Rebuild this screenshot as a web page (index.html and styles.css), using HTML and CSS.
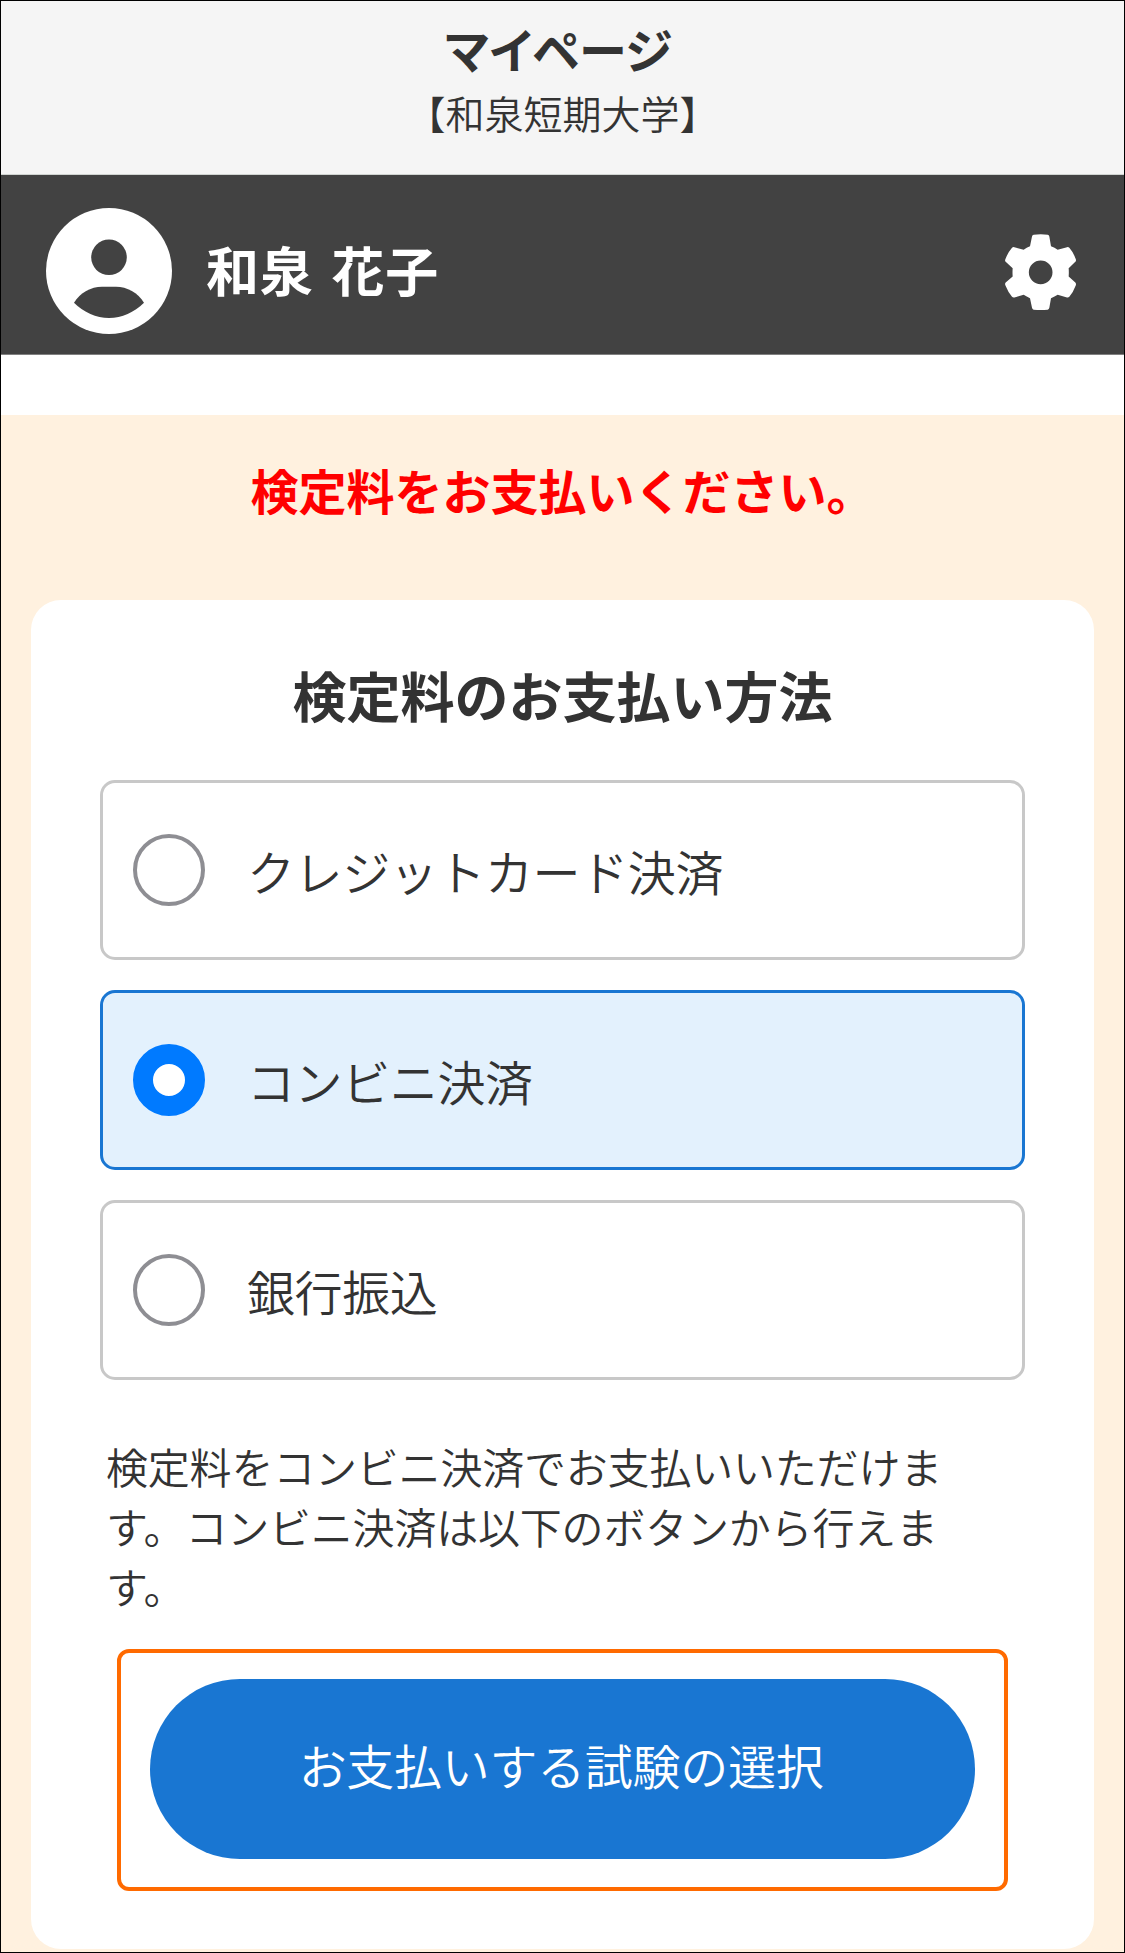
FILE: index.html
```html
<!DOCTYPE html>
<html lang="ja">
<head>
  <meta charset="UTF-8">
  <meta name="viewport" content="width=device-width, initial-scale=1.0">
  <title>マイページ</title>
  <link rel="stylesheet" href="styles.css">
</head>
<body>
  <div class="page">
    <header class="site-header">
      <h1>マイページ</h1>
      <p>【和泉短期大学】</p>
    </header>

    <div class="user-bar">
      <svg class="avatar" viewBox="0 0 126 126">
        <circle cx="63" cy="63" r="63" fill="#fff"/>
        <circle cx="63" cy="49.3" r="17.8" fill="#424242"/>
        <path d="M28 94.8C34 84.5 45 78.7 56 78.7H70C81 78.7 92 84.5 98 94.8C88 104.5 76 110 63 110C50 110 38 104.5 28 94.8Z" fill="#424242"/>
      </svg>
      <span class="user-name">和泉 花子</span>
      <svg class="gear" viewBox="138 102 213 227">
        <path fill="#fff" fill-rule="evenodd" d="M224 103.500Q245 101 266 103.500Q270 104 271 109L276 138Q287 142 296 149L324 141Q328 140 331 143Q343 157 350.500 177Q352 182 349 185L329 204Q330 216 329 229L349 247Q352 250 350.500 255Q343 275 331 290Q328 293 324 292L296 284Q287 290 276 294L271 323Q270 328 266 328.500Q245 330 224 328.500Q220 328 219 323L213 294Q203 290 194 284L166 292Q162 293 159 290Q147 275 139 255Q137 250 140 247L161 229Q160 216 161 204L140 185Q137 182 139 177Q147 157 159 143Q162 140 166 141L194 149Q203 142 213 138L219 109Q220 104 224 103.500ZM245 181A35.500 35.500 0 1 0 245 252A35.500 35.500 0 1 0 245 181Z"/>
      </svg>
    </div>

    <main class="content">
      <p class="notice">検定料をお支払いください。</p>

      <section class="card">
        <h2>検定料のお支払い方法</h2>
        <div class="options">
          <label class="option">
            <input type="radio" name="payment">
            <span>クレジットカード決済</span>
          </label>
          <label class="option selected">
            <input type="radio" name="payment" checked>
            <span>コンビニ決済</span>
          </label>
          <label class="option">
            <input type="radio" name="payment">
            <span>銀行振込</span>
          </label>
        </div>
        <p class="description">検定料をコンビニ決済でお支払いいただけます。コンビニ決済は以下のボタンから行えます。</p>
        <div class="button-frame">
          <button class="button" type="button">お支払いする試験の選択</button>
        </div>
      </section>
    </main>
  </div>
</body>
</html>
```
FILE: styles.css
```css
* {
  box-sizing: border-box;
}
body {
  margin: 0;
  font-family: "Noto Sans CJK JP", sans-serif;
  font-weight: 350;
  color: #333;
  background: #fff;
}
h1, h2, p {
  margin: 0;
}
.page {
  height: 1953px;
  border: 1px solid #000;
  display: flex;
  flex-direction: column;
}
.site-header {
  height: 174px;
  padding-top: 13px;
  background: #f5f5f5;
  border-bottom: 1px solid #d0d4d1;
  text-align: center;
}
.site-header h1 {
  padding-right: 8px;
  font-size: 48px;
  line-height: 68px;
  font-weight: bold;
  font-feature-settings: "palt";
}
.site-header p {
  font-size: 39px;
  line-height: 60px;
}
.user-bar {
  height: 180px;
  padding: 12px 48px 0 45px;
  background: #424242;
  border-bottom: 1px solid #808080;
  display: flex;
  align-items: center;
}
.avatar {
  width: 126px;
  height: 126px;
}
.user-name {
  margin-left: 34px;
  padding-bottom: 4px;
  color: #fff;
  font-size: 53px;
  font-weight: bold;
  letter-spacing: 0.8px;
  word-spacing: 5px;
}
.gear {
  width: 71px;
  height: 76px;
  margin-left: auto;
  margin-top: 2px;
}
.content {
  flex: 1;
  margin-top: 60px;
  padding: 0 30px 3px;
  background: #fff1df;
  display: flex;
  flex-direction: column;
}
.notice {
  height: 185px;
  padding-top: 38px;
  color: #f00;
  font-size: 48px;
  line-height: 72px;
  font-weight: bold;
  text-align: center;
}
.card {
  flex: 1;
  padding: 59px 69px 0;
  background: #fff;
  border-radius: 30px;
}
.card h2 {
  font-size: 54px;
  line-height: 72px;
  font-weight: bold;
  text-align: center;
}
.options {
  margin-top: 49px;
  display: flex;
  flex-direction: column;
  gap: 30px;
}
.option {
  height: 180px;
  padding-left: 30px;
  border: 3px solid #c8c8c8;
  border-radius: 15px;
  display: flex;
  align-items: center;
  font-size: 48px;
  letter-spacing: -0.4px;
}
.option.selected {
  background: #e3f1fd;
  border-color: #1976d2;
}
.option input {
  appearance: none;
  width: 72px;
  height: 72px;
  margin: 0 42px 0 0;
  border: 4px solid #8e8e93;
  border-radius: 50%;
}
.option input:checked {
  border: 20px solid #007aff;
  background: #fff;
}
.description {
  margin: 56px 6px 0;
  padding-right: 50px;
  font-size: 42px;
  line-height: 60px;
  letter-spacing: -0.2px;
}
.button-frame {
  margin: 33px 17px 0;
  padding: 26px 29px 28px;
  border: 4px solid #ff6a00;
  border-radius: 12px;
}
.button {
  width: 100%;
  height: 180px;
  display: block;
  padding: 0 3px 11px 0;
  border: 0;
  border-radius: 90px;
  background: #1976d2;
  color: #fff;
  font-family: inherit;
  font-size: 48px;
  font-weight: 350;
  letter-spacing: -0.3px;
}
```
